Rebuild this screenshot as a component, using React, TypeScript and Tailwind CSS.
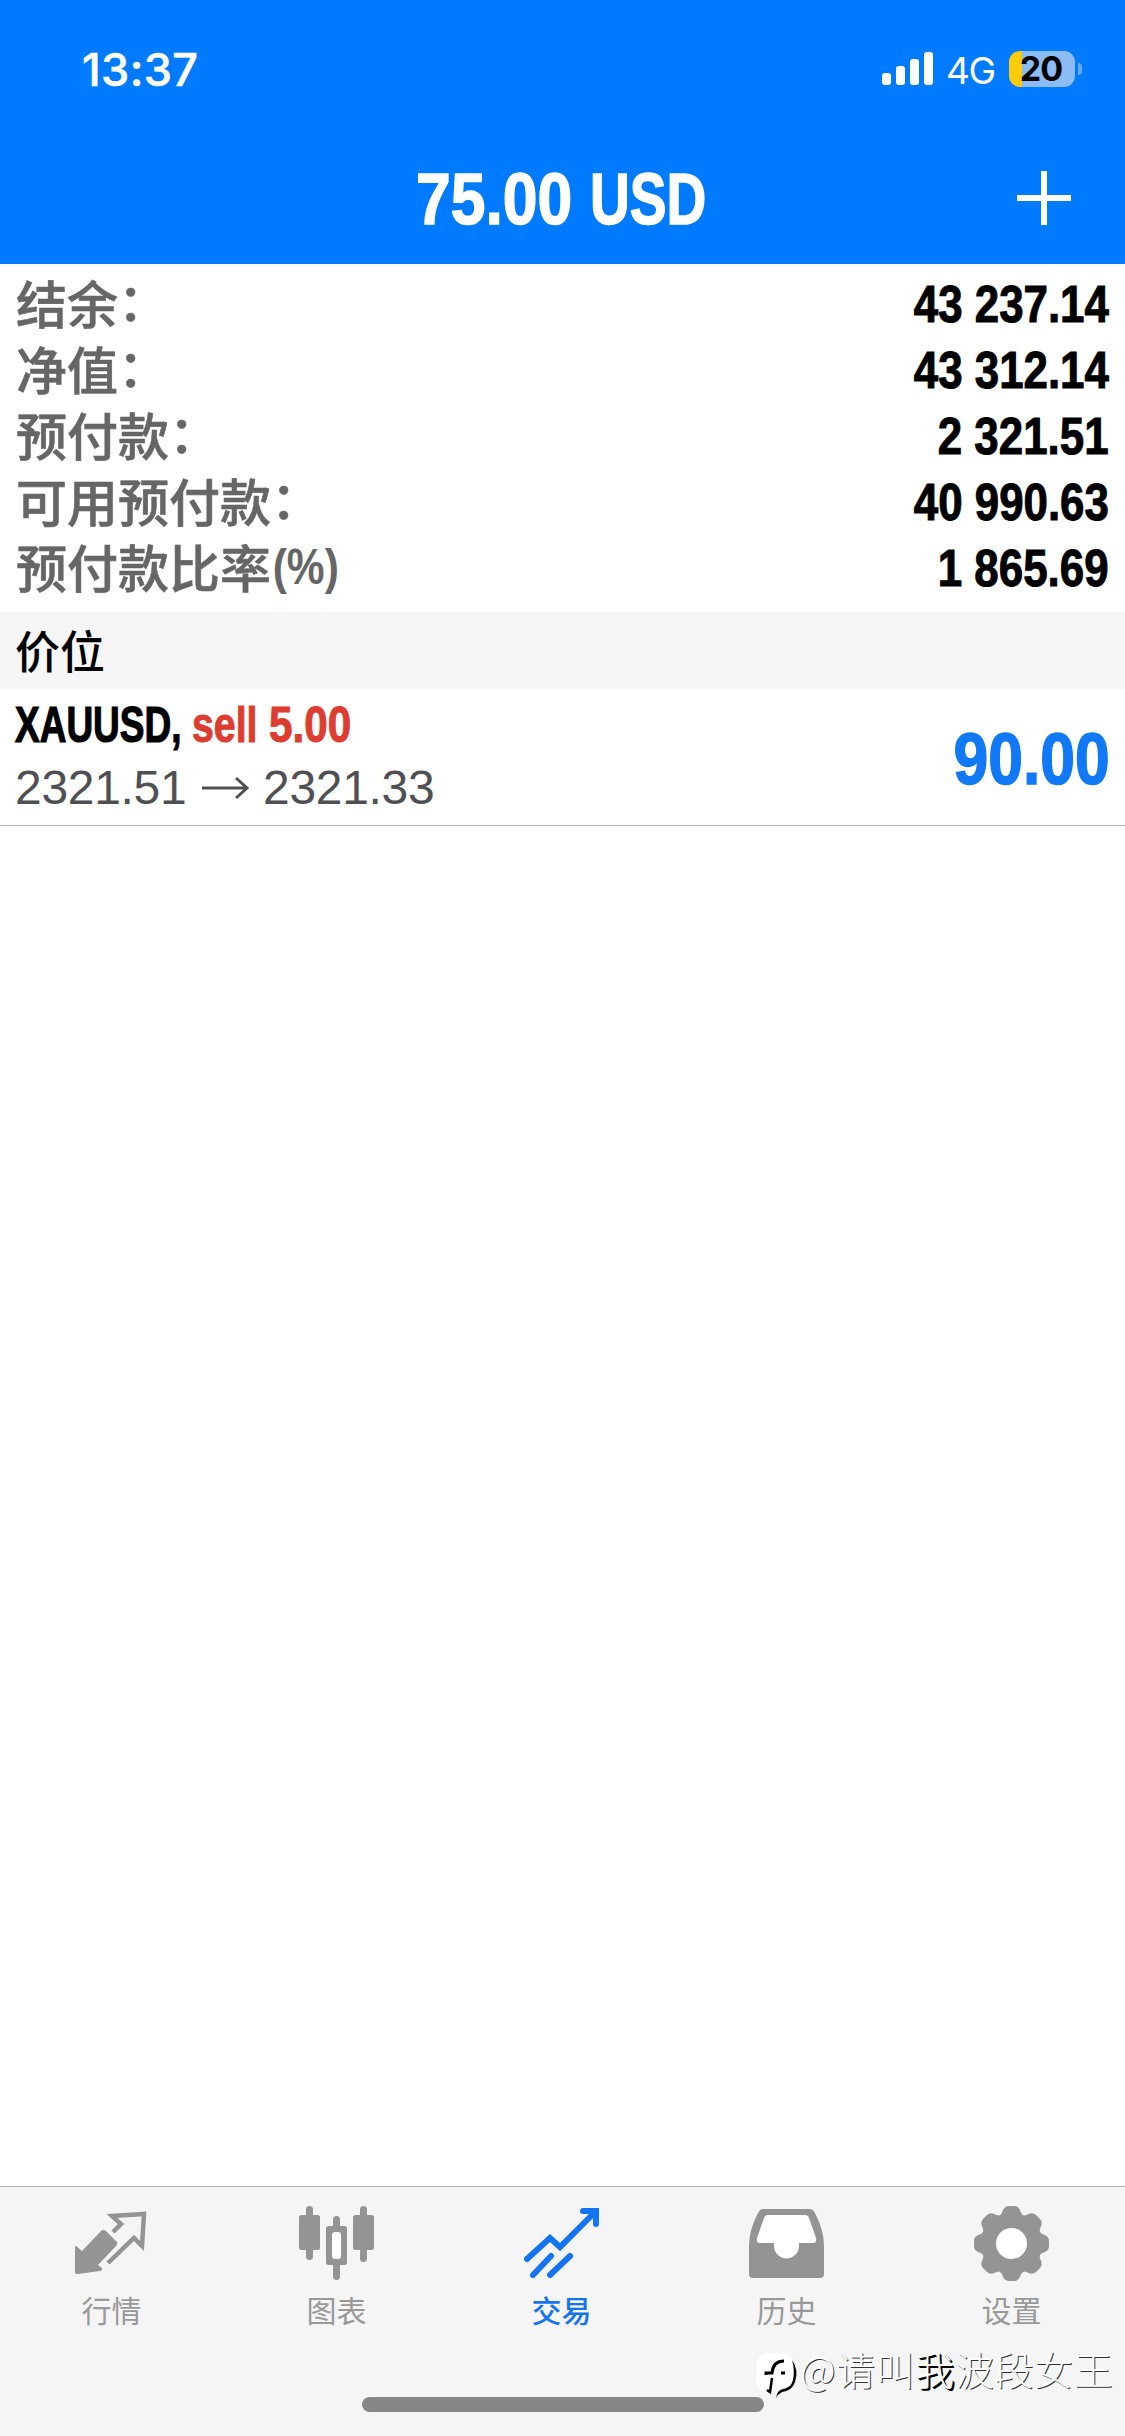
import type { ReactNode } from 'react';

const ACCOUNT_ROWS = [
  { label: '结余', colon: true, value: '43 237.14' },
  { label: '净值', colon: true, value: '43 312.14' },
  { label: '预付款', colon: true, value: '2 321.51' },
  { label: '可用预付款', colon: true, value: '40 990.63' },
  { label: '预付款比率', colon: false, value: '1 865.69' },
];

// Status bar: clock, signal, network and battery
function StatusBar() {
  return (
    <div className="flex h-[132px] items-center justify-between pt-[6px] pl-[82px] pr-[43px] font-['Inter',sans-serif]">
      <span className="text-[45px] leading-none font-medium tracking-[0.4px] [-webkit-text-stroke:0.6px_white]">13:37</span>
      <div className="flex items-center">
        <svg width="52" height="34" viewBox="0 0 52 34" fill="currentColor">
          <rect x="0" y="21" width="9" height="12" rx="3" />
          <rect x="14" y="14" width="9" height="19" rx="3" />
          <rect x="28" y="7" width="9" height="26" rx="3" />
          <rect x="42" y="0" width="9" height="33" rx="3" />
        </svg>
        <span className="ml-[12px] w-[63px] pt-[2px] text-[37px] leading-none tracking-[-1.5px]">4G</span>
        <div className="flex h-9 w-[66px] items-center justify-center rounded-[11px] bg-[linear-gradient(to_right,#ffcc0a_13px,#8cbcf6_13px)] pr-[2px] text-[34px] leading-none font-bold tracking-[-1px] text-black">
          20
        </div>
        <div className="ml-[3px] h-3 w-[4px] rounded-r-full bg-[#66a9f8]" />
      </div>
    </div>
  );
}

function QuotesIcon() {
  return (
    <svg width="75" height="75" viewBox="0 0 75 75">
      <path d="M2 40 L8 45 L27 25 Q29 23 32 25 L43 36 Q44 38 42 40 L24 59 L28 62 Q29 64 26 65 L4 68 Q1 68 1 66 L1 41 Q1 39 2 40 Z" fill="#949494" />
      <path d="M39 26 L47 18 L38 10 L70 8 L68 40 L60 32 L34 57" fill="none" stroke="#949494" strokeWidth="4.5" />
    </svg>
  );
}

function ChartIcon() {
  return (
    <svg width="75" height="75" viewBox="0 0 75 75" fill="#949494">
      <rect x="7" y="0" width="7" height="54" rx="3.5" />
      <rect x="0" y="9" width="21" height="35" rx="2.5" />
      <rect x="61" y="0" width="7" height="56" rx="3.5" />
      <rect x="54" y="9" width="21" height="35" rx="2.5" />
      <rect x="34" y="10" width="7" height="64" rx="3.5" />
      <rect x="27" y="20" width="21" height="39" rx="2.5" />
      <rect x="33" y="26" width="9" height="27" rx="3" fill="#fff" />
    </svg>
  );
}

function TradeIcon() {
  return (
    <svg width="75" height="75" viewBox="0 0 75 75" fill="none" stroke="#1574f2" strokeWidth="6" strokeLinecap="round" strokeLinejoin="round">
      <path d="M3 53 L26 32 L36 41 L71 6" strokeLinejoin="miter" />
      <path d="M59 5 H72 V18" strokeLinejoin="miter" />
      <path d="M27 50 L9 69 M46 50 L26 69" />
    </svg>
  );
}

function HistoryIcon() {
  return (
    <svg width="75" height="75" viewBox="0 0 75 75">
      <path d="M14 3 H60 Q64 3 66 7 Q75 24 75 40 V68 Q75 72 71 72 H4 Q0 72 0 68 V40 Q0 24 9 7 Q11 3 14 3 Z" fill="#949494" />
      <path d="M19 9 H56 Q59 9 60 12 L67 32 Q68 37 64 37 H50 V40 A12.5 12.5 0 0 1 25 40 V37 H11 Q7 37 8 32 L15 12 Q16 9 19 9 Z" fill="#fff" />
    </svg>
  );
}

function SettingsIcon() {
  return (
    <svg width="75" height="75" viewBox="0 0 75 75">
      <g fill="#949494">
        <circle cx="37.5" cy="37.5" r="30" />
        {[0, 45, 90, 135, 180, 225, 270, 315].map((angle) => (
          <path key={angle} transform={`rotate(${angle} 37.5 37.5)`} d="M25 10 Q28 8 29 4 Q31 0 35 0 H40 Q44 0 46 4 Q47 8 50 10 Z" />
        ))}
      </g>
      <circle cx="37.5" cy="37.5" r="15.5" fill="#fff" />
    </svg>
  );
}

function Tab({ label, icon, active = false }: { label: string; icon: ReactNode; active?: boolean }) {
  return (
    <div className={`flex flex-1 flex-col items-center pt-[19px] pr-[2px] ${active ? 'text-[#1574f2] font-medium' : 'text-[#999]'}`}>
      {icon}
      <span className="mt-[10px] text-[30px] leading-[36px]">{label}</span>
    </div>
  );
}

export default function App() {
  return (
    <div className="relative flex h-[2436px] w-[1125px] flex-col overflow-hidden bg-white font-['Liberation_Sans','Noto_Sans_CJK_SC',sans-serif]">
      <header className="h-[264px] bg-[#007aff] text-white">
        <StatusBar />
        <div className="flex h-[132px] items-center pl-[416px] pr-[54px]">
          <div className="flex flex-1 text-[73px] leading-none font-bold whitespace-nowrap [-webkit-text-stroke:1.5px_white]">
            <span className="w-[174px]">
              <span className="inline-block origin-left scale-x-[0.855]">75.00</span>
            </span>
            <span className="inline-block origin-left scale-x-[0.755]">USD</span>
          </div>
          <svg width="54" height="54" viewBox="0 0 54 54" stroke="currentColor" strokeWidth="6">
            <path d="M27 0 V54 M0 27 H54" />
          </svg>
        </div>
      </header>

      {/* Account summary */}
      <section className="h-[348px] pt-[5px] pr-[16px] pl-[16px]">
        {ACCOUNT_ROWS.map((row) => (
          <div key={row.label} className="flex h-[66px] items-center justify-between">
            <div className="flex font-['Noto_Sans_CJK_SC',sans-serif] text-[51px] leading-[66px] font-medium text-[#666] [-webkit-text-stroke:0.6px_#666]">
              <span>{row.label}</span>
              {row.colon ? (
                <span className="-mt-[3px]">：</span>
              ) : (
                <span className="inline-block origin-left scale-x-[0.85] pt-[1px] pl-[2px] font-['Liberation_Sans',sans-serif] text-[50px] font-bold [-webkit-text-stroke:0]">
                  (%)
                </span>
              )}
            </div>
            <span className="inline-block origin-right scale-x-[0.86] pt-[5px] text-[51px] leading-[66px] font-bold text-black [-webkit-text-stroke:1px_black]">
              {row.value}
            </span>
          </div>
        ))}
      </section>

      <div className="flex h-[77px] items-center bg-[#f6f6f6] pb-[2px] pl-[15px] font-['Noto_Sans_CJK_SC',sans-serif] text-[45px] font-medium text-black">
        价位
      </div>

      {/* Open position */}
      <section className="flex h-[137px] items-center justify-between border-b border-[#b8b8bc] pr-[15px] pl-[15px]">
        <div>
          <div className="flex h-[62px] text-[50px] leading-[62px] font-bold whitespace-nowrap">
            <span className="w-[177px]">
              <span className="inline-block origin-left scale-x-[0.74] text-black [-webkit-text-stroke:1.2px_black]">XAUUSD,</span>
            </span>
            <span className="w-[77px] text-[#dc3d30] [-webkit-text-stroke:1px_#dc3d30]">
              <span className="inline-block origin-left scale-x-[0.785]">sell</span>
            </span>
            <span className="inline-block origin-left scale-x-[0.845] text-[#dc3d30] [-webkit-text-stroke:1px_#dc3d30]">5.00</span>
          </div>
          <div className="flex h-[64px] items-center text-[48px] leading-[64px] tracking-[-0.3px] text-[#505054]">
            <span className="w-[186px]">2321.51</span>
            <svg className="mr-[14px]" width="48" height="24" viewBox="0 0 48 24" fill="none" stroke="currentColor" strokeWidth="3">
              <path d="M1 12 H46 M35 2 L46 12 L35 22" />
            </svg>
            <span>2321.33</span>
          </div>
        </div>
        <span className="inline-block origin-right scale-x-[0.855] pt-[3px] text-[73px] leading-none font-bold text-[#1179f5] [-webkit-text-stroke:1.5px_#1179f5]">
          90.00
        </span>
      </section>

      <main className="flex-1" />

      <nav className="flex h-[250px] border-t border-[#b0b0b0] bg-[#f5f5f5] font-['Noto_Sans_CJK_SC',sans-serif]">
        <Tab label="行情" icon={<QuotesIcon />} />
        <Tab label="图表" icon={<ChartIcon />} />
        <Tab label="交易" icon={<TradeIcon />} active />
        <Tab label="历史" icon={<HistoryIcon />} />
        <Tab label="设置" icon={<SettingsIcon />} />
      </nav>

      {/* Home indicator */}
      <div className="absolute bottom-6 left-[362px] h-[15px] w-[402px] rounded-full bg-[#868686]" />

      {/* Author tag */}
      <div className="absolute top-[2346px] left-[756px] flex items-start text-white">
        <svg width="44" height="56" viewBox="0 0 44 56">
          <rect x="0" y="7" width="39" height="40" rx="14" fill="#fff" />
          <path d="M10 29 V27 H16 Q17 15 28 15 M25 27 H29" fill="none" stroke="#000" strokeWidth="3" />
          <path d="M11 44 L14 46 L16 32" fill="none" stroke="#000" strokeWidth="2.5" />
          <path d="M36 14 Q43 24 39 36 Q36 45 26 46 Q22 48 20 52 Q21 44 27 43 Q35 42 37 34 Q39 24 36 14 Z" fill="#000" />
        </svg>
        <span className="-mt-[3px] font-['Noto_Sans_CJK_SC',sans-serif] text-[39px] leading-[50px] font-light tracking-[0.6px] [text-shadow:1px_1px_0_#333]">
          @请叫
          <span className="[text-shadow:1px_1px_0_#000,2px_2px_0_#000]">我</span>
          波段女王
        </span>
      </div>
    </div>
  );
}
